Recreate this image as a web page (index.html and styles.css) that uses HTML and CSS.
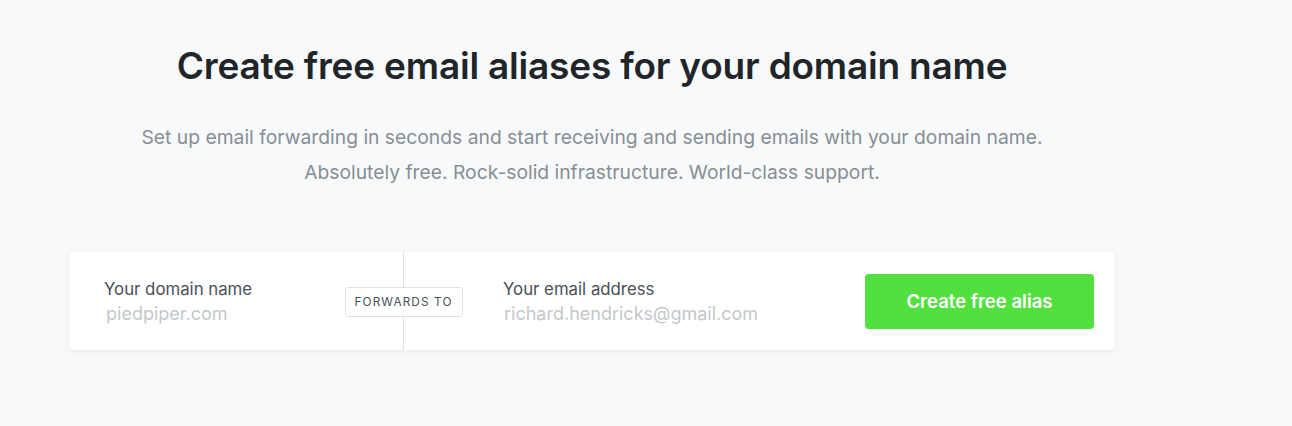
FILE: index.html
```html
<!DOCTYPE html>
<html lang="en">
<head>
<meta charset="utf-8">
<title>Create free email aliases</title>
<link rel="stylesheet" href="styles.css">
</head>
<body>
<main class="hero">
  <h1 class="title">Create free email aliases for your domain name</h1>
  <p class="subtitle">Set up email forwarding in seconds and start receiving and sending emails with your domain name.<br>Absolutely free. Rock-solid infrastructure. World-class support.</p>
  <form class="card">
    <div class="field field-domain">
      <label class="label">Your domain name</label>
      <input class="input" type="text" placeholder="piedpiper.com">
    </div>
    <div class="divider">
      <span class="badge">FORWARDS TO</span>
    </div>
    <div class="field field-email">
      <label class="label">Your email address</label>
      <input class="input" type="text" placeholder="richard.hendricks@gmail.com">
    </div>
    <button class="cta" type="button">Create free alias</button>
  </form>
</main>
</body>
</html>
```
FILE: styles.css
```css
* { box-sizing: border-box; }
html, body { margin: 0; padding: 0; }
body {
  background: #f8f9fa;
  font-family: "Inter", "Noto Sans", sans-serif;
  width: 1292px;
  height: 426px;
  overflow: hidden;
}
.hero {
  width: 1184px;
  display: flex;
  flex-direction: column;
  align-items: center;
  padding-top: 44px;
}
.title {
  margin: 0;
  font-size: 37px;
  font-weight: 600;
  color: #212529;
  line-height: 44px;
  letter-spacing: -0.2px;
}
.subtitle {
  margin: 32px 0 0;
  text-align: center;
  font-size: 19.3px;
  line-height: 35px;
  color: #868e96;
  font-weight: 400;
}
.card {
  margin-top: 62px;
  width: 1046px;
  height: 98px;
  background: #fff;
  border-radius: 5px;
  box-shadow: 0 2px 10px rgba(33, 37, 41, 0.06);
  display: flex;
  align-items: stretch;
  padding-right: 21px;
}
.field {
  display: flex;
  flex-direction: column;
  justify-content: center;
  padding-top: 2px;
}
.field-domain { width: 334px; padding-left: 35px; }
.field-email { flex: 1; padding-left: 99px; }
.label {
  font-size: 16.8px;
  color: #495057;
  line-height: 24px;
}
.input {
  border: 0;
  outline: none;
  padding: 0 0 0 2px;
  margin: 0;
  font-family: inherit;
  font-size: 18px;
  line-height: 26px;
  height: 26px;
  background: transparent;
  color: #495057;
  width: 290px;
}
.field-email .input { width: 320px; padding-left: 1px; }
.input::placeholder { color: #c3c7cc; }
.divider {
  width: 1px;
  background: #dee2e6;
  position: relative;
}
.badge {
  position: absolute;
  left: 50%;
  top: 50%;
  transform: translate(-50%, -50%);
  margin-top: 1px;
  width: 118px;
  height: 30px;
  display: flex;
  align-items: center;
  justify-content: center;
  background: #fff;
  border: 1px solid #dee2e6;
  border-radius: 3px;
  font-size: 11.8px;
  letter-spacing: 1.1px;
  color: #495057;
  font-weight: 400;
}
.cta {
  align-self: center;
  width: 229px;
  height: 55px;
  border: 0;
  border-radius: 4px;
  background: #52e03f;
  color: #fff;
  font-family: inherit;
  font-size: 18.5px;
  font-weight: 600;
  cursor: pointer;
}
```
